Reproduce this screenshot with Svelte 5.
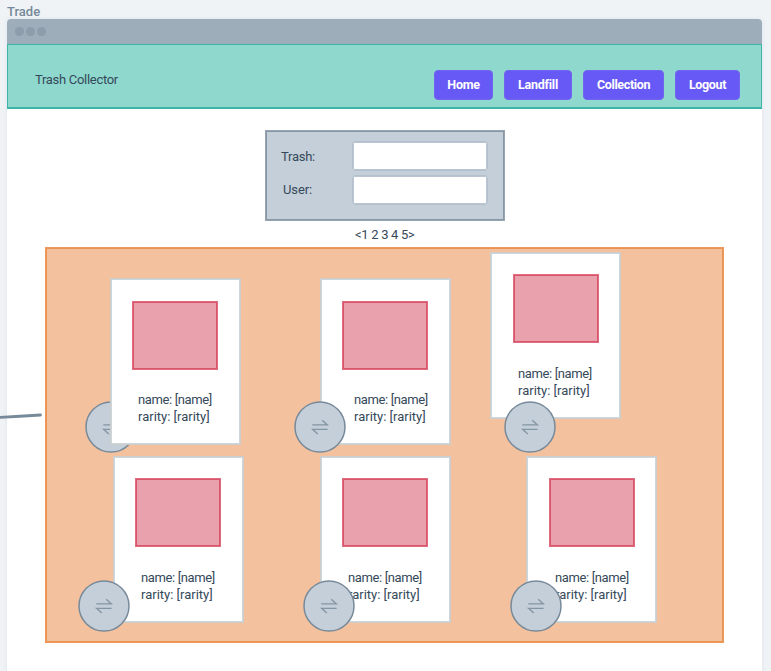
<script>
  const nav = [
    { label: 'Home', width: 59, ls: -0.3 },
    { label: 'Landfill', width: 68, ls: -0.25 },
    { label: 'Collection', width: 81, ls: -0.35 },
    { label: 'Logout', width: 65, ls: -0.35 }
  ];

  // Canvas positions are relative to the inside of the board border.
  // ix / iy place the picture inside the card, tx indents its text.
  const cards = [
    { x: 64, y: 30, ix: 20, iy: 21, tx: 26, swapX: 39, swapY: 153, behind: true },
    { x: 274, y: 30, ix: 20, iy: 21, tx: 32, swapX: 248, swapY: 153 },
    { x: 444, y: 4, ix: 21, iy: 20, tx: 26, swapX: 458, swapY: 153 },
    { x: 67, y: 208, ix: 20, iy: 20, tx: 26, swapX: 32, swapY: 332 },
    { x: 274, y: 208, ix: 20, iy: 20, tx: 26, swapX: 257, swapY: 332 },
    { x: 480, y: 208, ix: 21, iy: 20, tx: 27, swapX: 464, swapY: 332 }
  ];
</script>

<main>
  <div class="frame-name">Trade</div>
  <section class="window">
    <div class="titlebar"><i></i><i></i><i></i></div>
    <header>
      <span class="brand">Trash Collector</span>
      <nav>
        {#each nav as n}
          <button style="width: {n.width}px; letter-spacing: {n.ls}px">{n.label}</button>
        {/each}
      </nav>
    </header>

    <form>
      <label><span class="trash">Trash:</span><input type="text" /></label>
      <label><span class="user">User:</span><input type="text" /></label>
    </form>

    <div class="pager">&lt;1 2 3 4 5&gt;</div>

    <div class="board">
      {#each cards as c}
        <article style="left: {c.x}px; top: {c.y}px; padding-top: {c.iy + 1}px">
          <div class="image" style="margin-left: {c.ix + 1}px"></div>
          <div class="info" style="padding: {42 - c.iy}px 0 0 {c.tx + 1}px">
            <div class="name">name: [name]</div>
            <div class="rarity">rarity: [rarity]</div>
          </div>
        </article>
        <div class="swap" class:behind={c.behind} style="left: {c.swapX}px; top: {c.swapY}px">
          <svg width="52" height="52" viewBox="0 0 52 52">
            <circle cx="26" cy="26" r="25" />
            <path d="M18.3 23.9H33.4L28.2 19.2M33.6 28.3H18.6L23.8 33" />
          </svg>
        </div>
      {/each}
    </div>
  </section>

  <svg class="connector" width="44" height="12" viewBox="0 0 44 12">
    <path d="M-3 7.6Q18 6.6 40.5 5" />
  </svg>
</main>

<style>
  :global(body) {
    background: #eff3f6;
  }
  main {
    position: relative;
    box-sizing: border-box;
    height: 671px;
    padding: 4px 9px 0 7px;
    overflow: hidden;
    font: 13px/15px Roboto, 'Open Sans', sans-serif;
    color: #35495a;
  }
  .frame-name {
    height: 15px;
    line-height: 16px;
    color: #768899;
    font-weight: 500;
    letter-spacing: 0;
  }
  .window {
    height: 700px;
    background: #fff;
    border-radius: 4px 4px 0 0;
    box-shadow: 0 0 4px rgba(60, 80, 100, 0.09);
  }
  .titlebar {
    display: flex;
    align-items: center;
    gap: 2.3px;
    height: 25px;
    padding: 0 0 0 8px;
    box-sizing: border-box;
    background: #9eadba;
    border-radius: 4px 4px 0 0;
  }
  .titlebar i {
    width: 8.8px;
    height: 8.8px;
    border-radius: 50%;
    background: #8d9dac;
  }
  header {
    display: flex;
    justify-content: space-between;
    box-sizing: border-box;
    height: 65px;
    padding: 25px 21px 0 27px;
    background: #8fd8ce;
    border: 1px solid #3fb5a7;
    border-bottom-width: 2px;
  }
  .brand {
    padding-top: 2px;
    letter-spacing: -0.3px;
  }
  nav {
    display: flex;
    gap: 11px;
  }
  button {
    height: 30px;
    padding: 0;
    border: 1px solid #7165ee;
    border-radius: 4px;
    background: #6759f5;
    color: #fff;
    font: 700 12.5px/28px Roboto, sans-serif;
  }
  form {
    display: flex;
    flex-direction: column;
    gap: 4px;
    box-sizing: border-box;
    width: 240px;
    height: 91px;
    margin: 21px 0 0 258px;
    padding: 10px 16px 0 15px;
    background: #c4cfd9;
    border: 1px solid #97a5b2;
    box-shadow: inset 0 0 0 1px #8797a6;
  }
  label {
    display: flex;
    justify-content: space-between;
  }
  label span {
    padding-top: 8px;
  }
  .trash {
    letter-spacing: -0.25px;
  }
  .user {
    padding: 7px 0 0 2px;
    letter-spacing: -0.1px;
  }
  input {
    box-sizing: border-box;
    width: 136px;
    height: 30px;
    border: 1px solid #b4c1cd;
    border-radius: 3px;
    background: #fff;
    box-shadow: inset 0 0 0 1px #b9c6d1;
  }
  .pager {
    height: 20px;
    margin: 6px 0 0 348px;
    line-height: 16px;
    letter-spacing: -0.3px;
  }
  .board {
    position: relative;
    box-sizing: border-box;
    width: 679px;
    height: 396px;
    margin-left: 38px;
    background: #f3c19e;
    border: 1px solid #ee9a5f;
    box-shadow: inset 0 0 0 1px #ea9252;
  }
  article {
    position: absolute;
    z-index: 1;
    box-sizing: border-box;
    width: 131px;
    height: 167px;
    background: #fff;
    border: 1px solid #d0cdc9;
    box-shadow: inset 0 0 0 1px #cbd6de;
  }
  .image {
    box-sizing: border-box;
    width: 86px;
    height: 69px;
    background: #e9a1ae;
    border: 1px solid #e06d80;
    box-shadow: inset 0 0 0 1px #d9536b;
  }
  .info {
    line-height: 17px;
    white-space: nowrap;
  }
  .name {
    letter-spacing: -0.38px;
  }
  .swap {
    position: absolute;
    z-index: 2;
    width: 52px;
    height: 52px;
  }
  .swap.behind {
    z-index: 0;
  }
  svg {
    display: block;
    fill: none;
  }
  circle {
    fill: #c4cfd9;
    stroke: #788a9a;
    stroke-width: 1.5;
  }
  .swap path {
    stroke: #8495a4;
    stroke-width: 1.3;
  }
  .connector {
    position: absolute;
    left: 0;
    top: 410px;
  }
  .connector path {
    stroke: #778a9a;
    stroke-width: 2.8;
    stroke-linecap: round;
  }
</style>
